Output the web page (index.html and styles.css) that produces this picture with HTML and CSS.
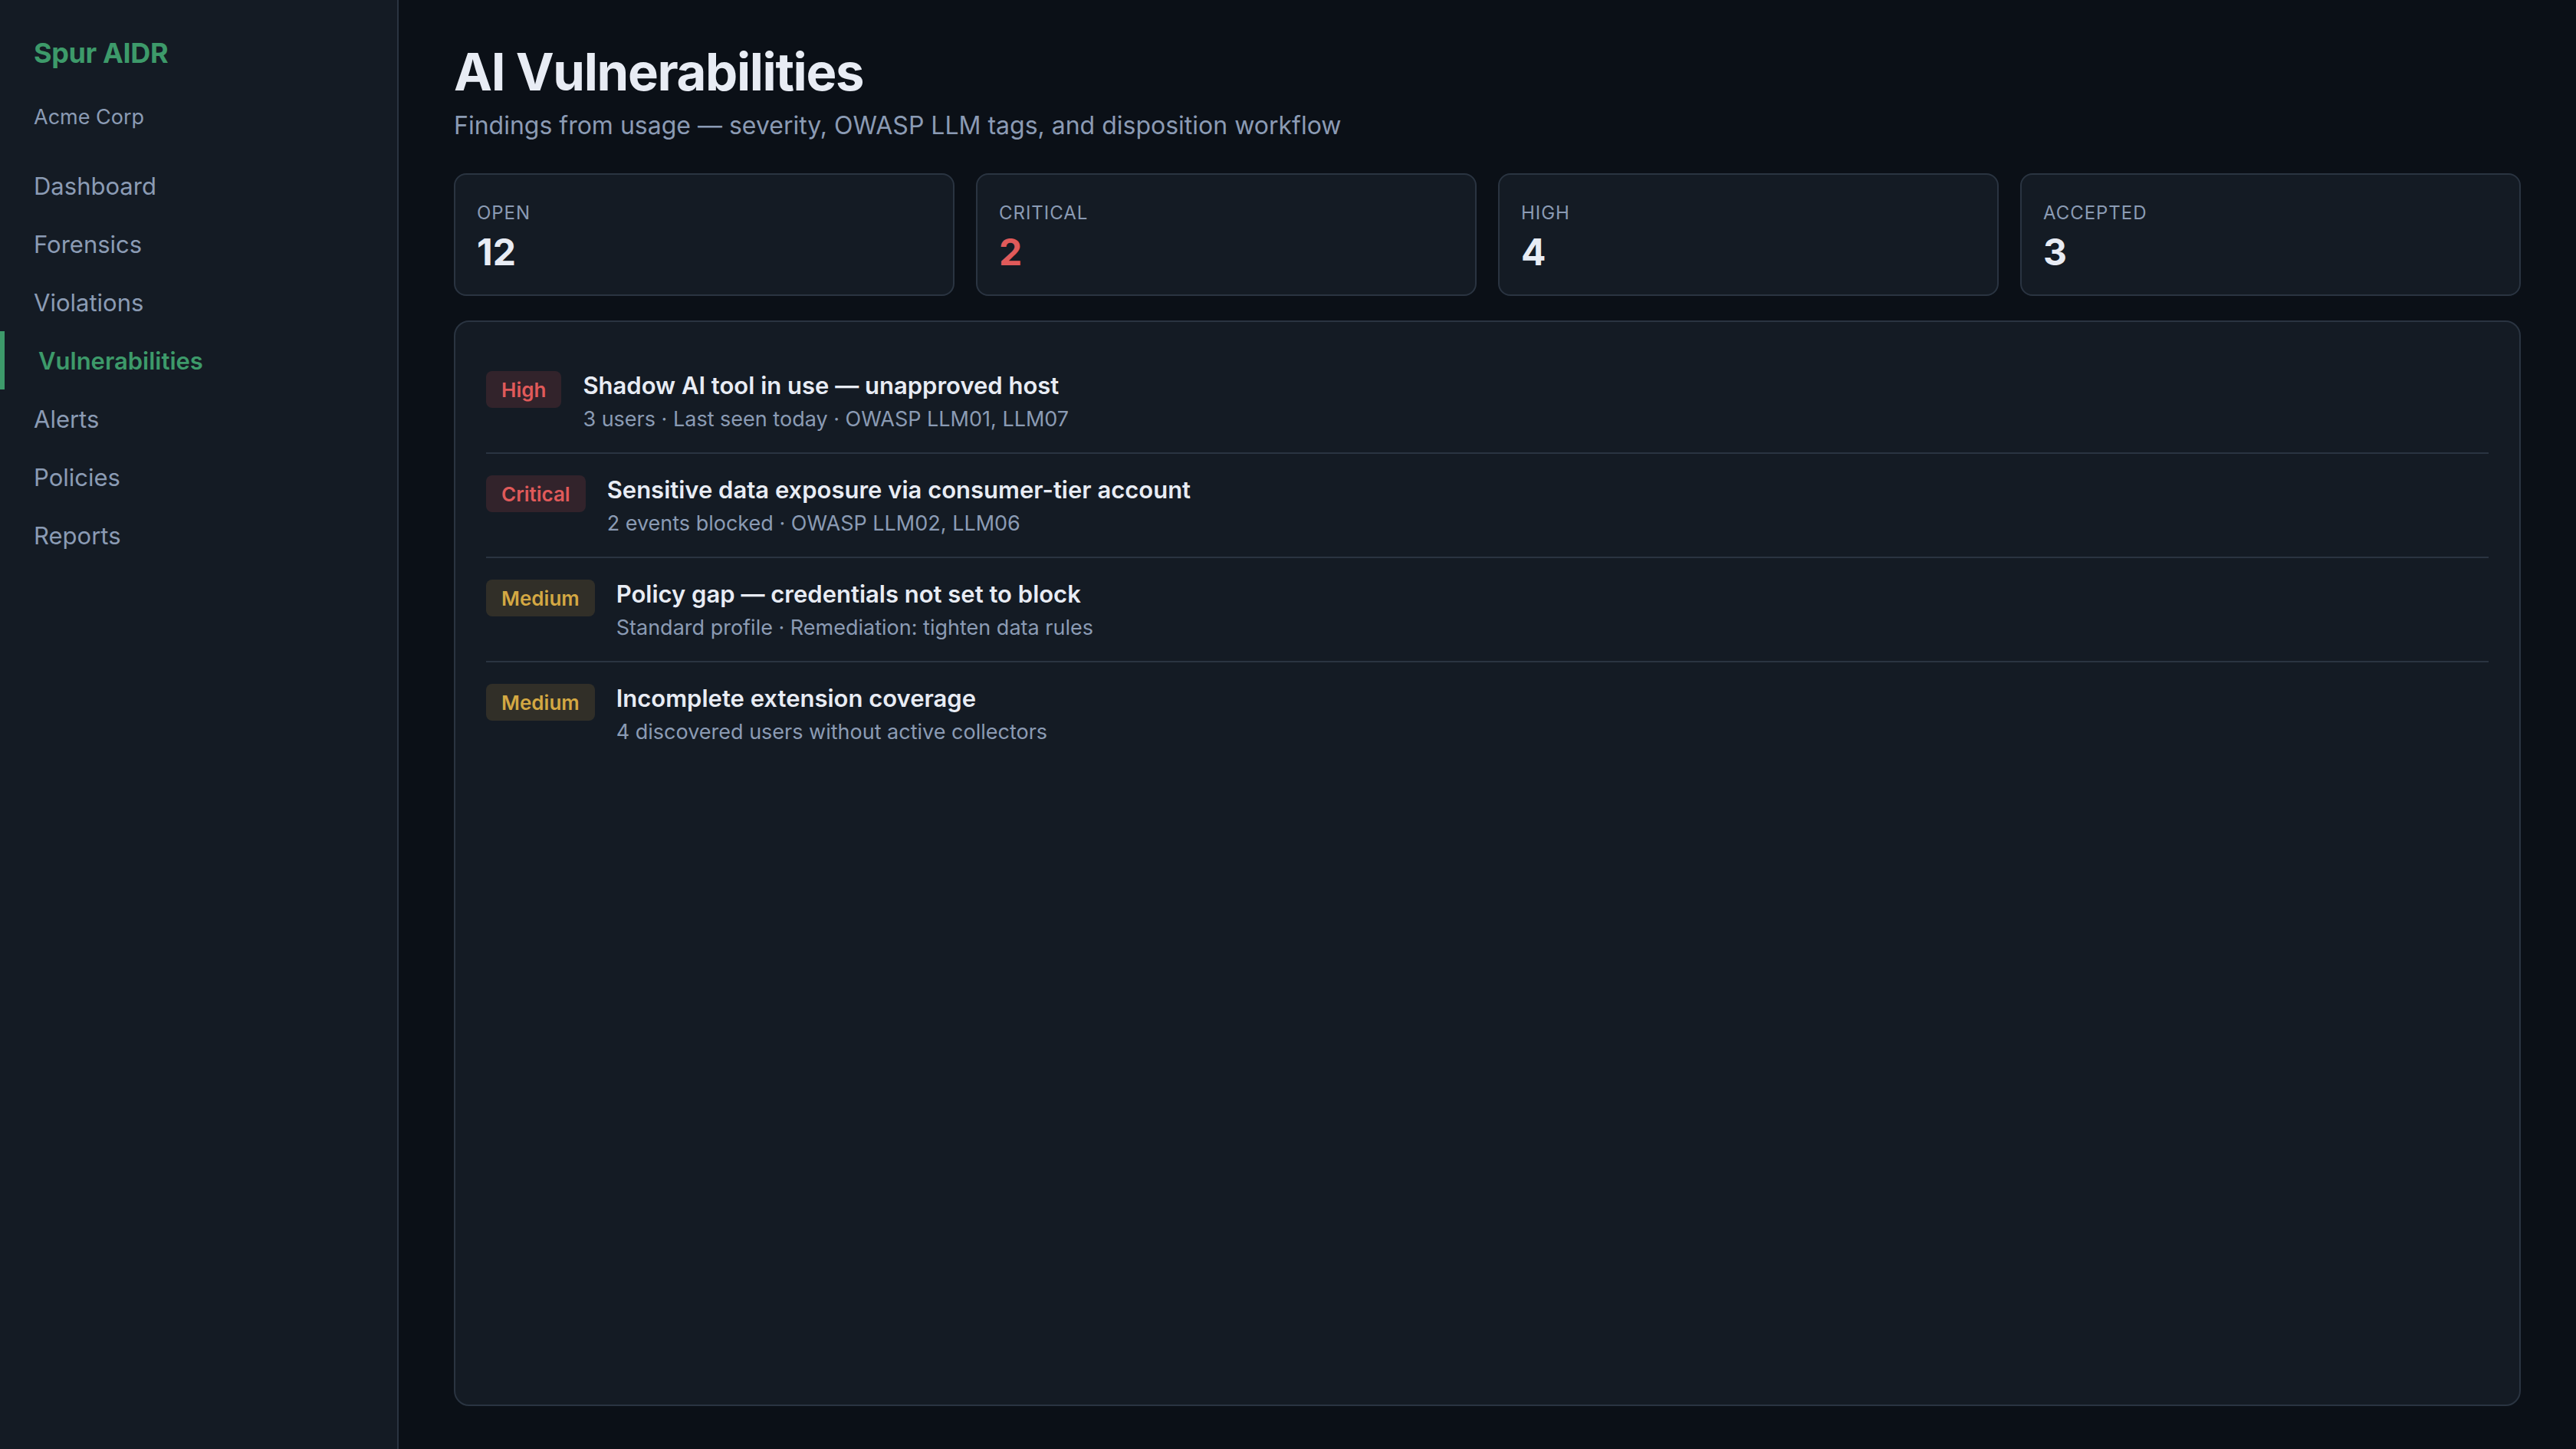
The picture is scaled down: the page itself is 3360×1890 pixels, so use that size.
FILE: index.html
```html
<!DOCTYPE html>
<html lang="en">
<head>
    <meta charset="UTF-8">
    <meta name="viewport" content="width=device-width, initial-scale=1.0">
    <title>AI Vulnerabilities - Spur AIDR</title>
    <link rel="stylesheet" href="styles.css">
</head>
<body>

<div class="app">
    <!-- Sidebar -->
    <aside class="sidebar">
        <div class="brand">Spur AIDR</div>
        <div class="org">Acme Corp</div>
        <nav class="nav">
            <a href="#">Dashboard</a>
            <a href="#">Forensics</a>
            <a href="#">Violations</a>
            <a href="#" class="active" aria-current="page">Vulnerabilities</a>
            <a href="#">Alerts</a>
            <a href="#">Policies</a>
            <a href="#">Reports</a>
        </nav>
    </aside>

    <!-- Main content -->
    <main class="main">
        <h1>AI Vulnerabilities</h1>
        <p class="subtitle">Findings from usage — severity, OWASP LLM tags, and disposition workflow</p>

        <div class="stats">
            <div class="stat">
                <div class="stat-label">Open</div>
                <div class="stat-value">12</div>
            </div>
            <div class="stat">
                <div class="stat-label">Critical</div>
                <div class="stat-value danger">2</div>
            </div>
            <div class="stat">
                <div class="stat-label">High</div>
                <div class="stat-value">4</div>
            </div>
            <div class="stat">
                <div class="stat-label">Accepted</div>
                <div class="stat-value">3</div>
            </div>
        </div>

        <!-- Findings list -->
        <section class="panel">
            <ul class="findings">
                <li class="finding">
                    <span class="badge badge-red">High</span>
                    <div>
                        <h2>Shadow AI tool in use — unapproved host</h2>
                        <p>3 users · Last seen today · OWASP LLM01, LLM07</p>
                    </div>
                </li>
                <li class="finding">
                    <span class="badge badge-red">Critical</span>
                    <div>
                        <h2>Sensitive data exposure via consumer-tier account</h2>
                        <p>2 events blocked · OWASP LLM02, LLM06</p>
                    </div>
                </li>
                <li class="finding">
                    <span class="badge badge-amber">Medium</span>
                    <div>
                        <h2>Policy gap — credentials not set to block</h2>
                        <p>Standard profile · Remediation: tighten data rules</p>
                    </div>
                </li>
                <li class="finding">
                    <span class="badge badge-amber">Medium</span>
                    <div>
                        <h2>Incomplete extension coverage</h2>
                        <p>4 discovered users without active collectors</p>
                    </div>
                </li>
            </ul>
        </section>
    </main>
</div>

</body>
</html>
```

FILE: styles.css
```css
:root {
    --bg: #0b1017;
    --surface: #141b24;
    --border: #2a3441;
    --text: #e8ecf4;
    --muted: #8b9bb4;
    --green: #3d9a6a;
    --red: #e05a5a;
    --amber: #d4a843;
}

* {
    margin: 0;
    padding: 0;
    box-sizing: border-box;
}

body {
    font-family: Inter, "Liberation Sans", sans-serif;
    background: var(--bg);
    color: var(--text);
}

.app {
    display: flex;
    min-height: 100vh;
}

/* Sidebar */
.sidebar {
    flex: 0 0 520px;
    padding: 48px 0;
    background: var(--surface);
    border-right: 2px solid var(--border);
}

.brand {
    padding: 0 44px;
    margin-bottom: 46px;
    font-size: 36px;
    font-weight: 700;
    line-height: 42px;
    letter-spacing: -0.01em;
    color: var(--green);
}

.org {
    padding: 0 44px;
    margin-bottom: 34px;
    font-size: 27px;
    line-height: 34px;
    color: var(--muted);
}

.nav a {
    display: block;
    padding: 21px 44px 19px;
    font-size: 31px;
    line-height: 36px;
    color: var(--muted);
    text-decoration: none;
}

.nav a.active {
    border-left: 6px solid var(--green);
    color: var(--green);
    font-weight: 600;
}

/* Main content */
.main {
    flex: 1;
    display: flex;
    flex-direction: column;
    padding: 56px 72px;
}

h1 {
    margin-bottom: 12px;
    font-size: 67px;
    font-weight: 700;
    line-height: 76px;
    letter-spacing: -0.02em;
}

.subtitle {
    margin-bottom: 42px;
    font-size: 32px;
    line-height: 40px;
    color: var(--muted);
}

/* Stat cards */
.stats {
    display: grid;
    grid-template-columns: repeat(4, 1fr);
    gap: 28px;
    margin-bottom: 32px;
}

.stat {
    padding: 35px 28px 27px;
    background: var(--surface);
    border: 2px solid var(--border);
    border-radius: 16px;
}

.stat-label {
    margin-bottom: 8px;
    font-size: 24px;
    line-height: 30px;
    letter-spacing: 0.04em;
    text-transform: uppercase;
    color: var(--muted);
}

.stat-value {
    font-size: 48px;
    font-weight: 700;
    line-height: 56px;
}

.stat-value.danger {
    color: var(--red);
}

/* Findings */
.panel {
    flex: 1;
    padding: 36px 40px;
    background: var(--surface);
    border: 2px solid var(--border);
    border-radius: 20px;
}

.findings {
    list-style: none;
}

.finding {
    display: flex;
    align-items: flex-start;
    gap: 28px;
    padding: 28px 0 26px;
    border-bottom: 2px solid var(--border);
}

.finding:last-child {
    border-bottom: none;
}

.finding h2 {
    margin-bottom: 8px;
    font-size: 31px;
    font-weight: 600;
    line-height: 38px;
}

.finding p {
    font-size: 27px;
    line-height: 34px;
    color: var(--muted);
}

.badge {
    padding: 9px 20px 7px;
    border-radius: 8px;
    font-size: 26px;
    font-weight: 600;
    line-height: 32px;
}

.badge-red {
    background: rgba(224, 90, 90, 0.15);
    color: var(--red);
}

.badge-amber {
    background: rgba(212, 168, 67, 0.15);
    color: var(--amber);
}
```
